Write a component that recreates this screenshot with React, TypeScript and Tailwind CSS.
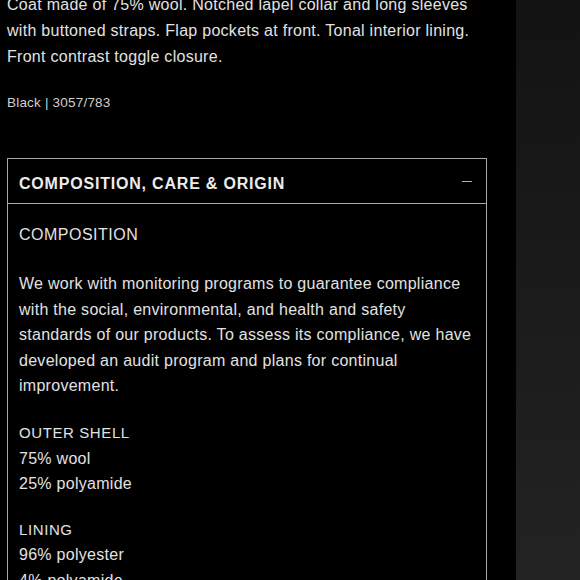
import React from "react";

const App = () => {
  return (
    <div
      className="flex h-[580px] w-[580px] overflow-hidden bg-black"
      style={{ fontFamily: '"Liberation Sans", Arial, sans-serif' }}
    >
      {/* product details column */}
      <div className="w-[516px] shrink-0 bg-black pl-[7px] text-[#e2e2e2]">
        <p className="mt-[-8px] text-[16px] leading-[25.8px] tracking-[0.28px]">
          Coat made of 75% wool. Notched lapel collar and long sleeves
          <br />
          with buttoned straps. Flap pockets at front. Tonal interior lining.
          <br />
          Front contrast toggle closure.
        </p>
        <p className="mt-[24px] text-[13.5px] leading-[20px] tracking-[0.2px] text-[#cfcfcf]">
          Black | 3057/783
        </p>

        {/* accordion */}
        <div className="mt-[45px] w-[480px] border border-[#a8a8a8]">
          <div className="flex h-[45px] items-center justify-between border-b border-[#a8a8a8] pl-[11px] pr-[14px]">
            <span className="pt-[5px] text-[16px] font-bold tracking-[0.8px] text-[#ececec]">
              COMPOSITION, CARE &amp; ORIGIN
            </span>
            <span className="block h-px w-[10px] bg-[#b0b0b0]" />
          </div>
          <div className="pl-[11px] pt-[18px] text-[16px] leading-[25.6px] tracking-[0.28px]">
            <p className="tracking-[0.5px]">COMPOSITION</p>
            <p className="mt-[23px]">
              We work with monitoring programs to guarantee compliance
              <br />
              with the social, environmental, and health and safety
              <br />
              standards of our products. To assess its compliance, we have
              <br />
              developed an audit program and plans for continual
              <br />
              improvement.
            </p>
            <div className="mt-[21px]">
              <p className="text-[15px] tracking-[0.6px]">OUTER SHELL</p>
              <p>75% wool</p>
              <p>25% polyamide</p>
            </div>
            <div className="mt-[20px]">
              <p className="text-[15px] tracking-[0.6px]">LINING</p>
              <p>96% polyester</p>
              <p>4% polyamide</p>
            </div>
          </div>
        </div>
      </div>

      {/* side strip */}
      <div className="flex-1 bg-gradient-to-b from-[#131313] to-[#232323]" />
    </div>
  );
};

export default App;
